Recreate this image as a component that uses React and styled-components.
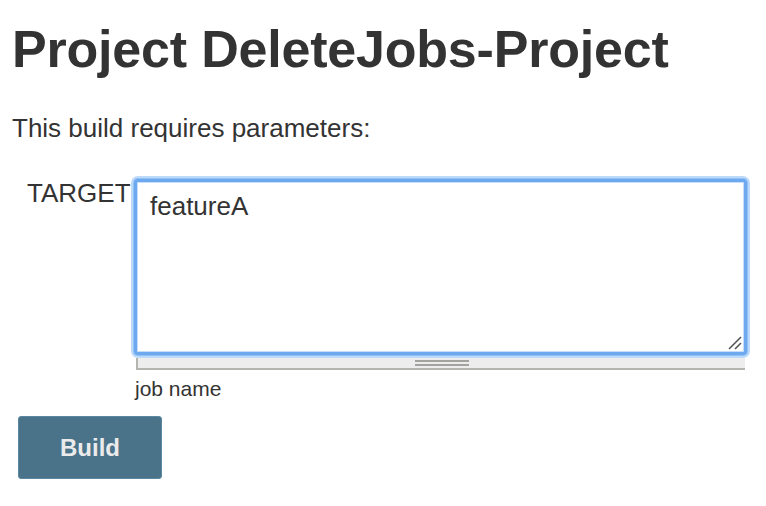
import React from 'react';
import styled, { createGlobalStyle } from 'styled-components';

const GlobalStyle = createGlobalStyle`
  html, body {
    margin: 0;
    padding: 0;
    background: #fff;
  }
  body {
    font-family: "Liberation Sans", Arial, Helvetica, sans-serif;
    color: #333;
  }
`;

const Page = styled.div`
  padding: 0 12px;
`;

const Title = styled.h1`
  margin: 19px 0 0;
  font-size: 52px;
  line-height: 60px;
  font-weight: bold;
  letter-spacing: -0.2px;
`;

const Intro = styled.p`
  margin: 34px 0 0;
  font-size: 26px;
  line-height: 30px;
`;

const ParamRow = styled.div`
  display: flex;
  align-items: flex-start;
  margin-top: 33px;
`;

const ParamName = styled.div`
  width: 104px;
  padding-left: 15px;
  padding-top: 2px;
  font-size: 26px;
  line-height: 30px;
  white-space: nowrap;
`;

const Field = styled.div`
  display: flex;
  flex-direction: column;
  width: 619px;
`;

const AreaWrap = styled.div`
  position: relative;
  padding: 3px;
`;

const Area = styled.textarea`
  display: block;
  box-sizing: border-box;
  width: 613px;
  height: 176px;
  margin: 0;
  padding: 9px 13px;
  border: 3px solid #6ea9ef;
  border-radius: 4px;
  box-shadow: 0 0 0 1px #8fc0f6, 0 0 0 3px #bedaf9, inset 0 0 0 1px #c4defb;
  outline: none;
  resize: none;
  font-family: "Liberation Sans", Arial, Helvetica, sans-serif;
  font-size: 26px;
  line-height: 30px;
  color: #333;
  background: #fff;
`;

const Grip = styled.svg`
  position: absolute;
  right: 8px;
  bottom: 8px;
  width: 14px;
  height: 14px;
`;

const ResizeBar = styled.div`
  display: flex;
  flex-direction: column;
  align-items: center;
  justify-content: center;
  gap: 2px;
  box-sizing: border-box;
  height: 12px;
  margin: 0 5px;
  background: #ededed;
  border-left: 2px solid #b5b5b0;
  border-bottom: 2px solid #b5b5b0;
`;

const HandleLine = styled.span`
  display: block;
  width: 54px;
  height: 2px;
  background: #a2a29e;
`;

const Description = styled.div`
  margin-top: 7px;
  padding-left: 4px;
  font-size: 21px;
  line-height: 24px;
`;

const BuildButton = styled.button`
  display: block;
  box-sizing: border-box;
  width: 144px;
  height: 63px;
  margin: 15px 0 0 6px;
  padding: 0;
  background: #4a7289;
  border: 1px solid #5a88a2;
  border-radius: 3px;
  color: #ebebeb;
  font-family: "Liberation Sans", Arial, Helvetica, sans-serif;
  font-size: 24px;
  font-weight: bold;
  cursor: pointer;
`;

export default function App() {
  return (
    <Page>
      <GlobalStyle />
      <Title>Project DeleteJobs-Project</Title>
      <Intro>This build requires parameters:</Intro>
      <ParamRow>
        <ParamName>TARGET</ParamName>
        <Field>
          <AreaWrap>
            <Area defaultValue="featureA" />
            <Grip viewBox="0 0 14 14">
              <line x1="1" y1="13" x2="13" y2="1" stroke="#555" strokeWidth="1.6" />
              <line x1="7" y1="13" x2="13" y2="7" stroke="#555" strokeWidth="1.6" />
            </Grip>
          </AreaWrap>
          <ResizeBar>
            <HandleLine />
            <HandleLine />
          </ResizeBar>
          <Description>job name</Description>
        </Field>
      </ParamRow>
      <BuildButton>Build</BuildButton>
    </Page>
  );
}
